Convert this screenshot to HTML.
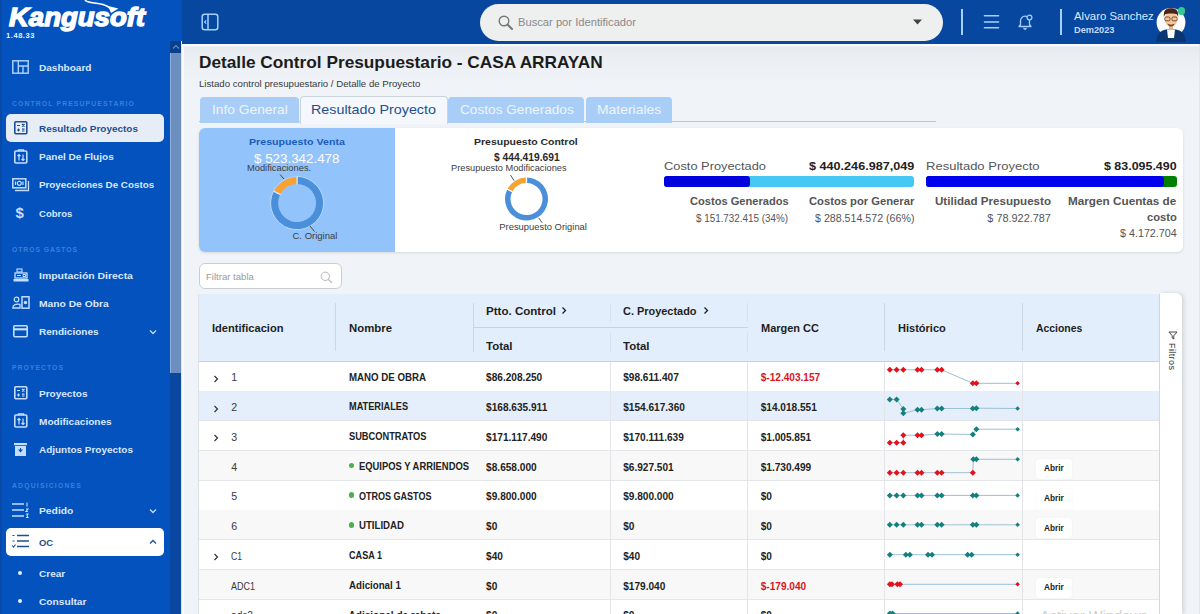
<!DOCTYPE html>
<html><head><meta charset="utf-8"><title>Kangusoft</title>
<style>
html,body{margin:0;padding:0;}
body{width:1200px;height:614px;overflow:hidden;position:relative;background:#f0f4f8;font-family:"Liberation Sans",sans-serif;}
.t{position:absolute;white-space:nowrap;}
</style></head><body>

<div style="position:absolute;left:182px;top:44px;width:1018px;height:570px;background:linear-gradient(#f7f9fc 0px,#f7f9fc 1.5px,#e6e9ed 3px,#ebeef2 14px,#f0f4f8 40px,#f0f4f8 100%);"></div>
<div style="position:absolute;left:182px;top:44px;width:1.8px;height:570px;background:#f8fafd;"></div>
<div style="position:absolute;left:1199px;top:44px;width:1px;height:570px;background:#e4e6e9;"></div>
<div style="position:absolute;left:0px;top:0px;width:182px;height:614px;background:#0352bd;"></div>
<div style="position:absolute;left:0px;top:0px;width:2px;height:614px;background:#0a49a6;"></div>
<div style="position:absolute;left:170px;top:41px;width:12px;height:12px;background:#0a3f8e;"></div>
<svg style="position:absolute;left:170px;top:41px;" width="12" height="12" viewBox="0 0 12 12"><path d="M3 7.5 L6 4.5 L9 7.5" fill="none" stroke="#5f88c8" stroke-width="1.2"/></svg>
<div style="position:absolute;left:170px;top:53px;width:12px;height:320px;background:#6c8fbf;"></div>
<div style="position:absolute;left:170px;top:53px;width:1px;height:320px;background:#8eb0dc;"></div>
<div style="position:absolute;left:170px;top:373px;width:12px;height:241px;background:#0a47a0;"></div>
<div style="position:absolute;left:181px;top:41px;width:1px;height:573px;background:#dfe6f0;"></div>
<div class="t" style="left:8.80px;top:5.01px;font-size:25.5px;line-height:25.5px;color:#ffffff;font-weight:700;font-style:italic;transform:scaleX(1.0789);transform-origin:0 0;-webkit-text-stroke:1.4px #ffffff;">Kangusoft</div>
<svg style="position:absolute;left:80px;top:0px;" width="45" height="16" viewBox="0 0 45 16"><path d="M5 0 C7 3, 15 2.5, 23 4.5 C27 5.5, 29 7, 31 9" fill="none" stroke="#ffffff" stroke-width="1.5"/><path d="M28 6 L38.5 8.5 L31 13 Z" fill="#ffffff"/></svg>
<div class="t" style="left:6.00px;top:31.65px;font-size:7.5px;line-height:7.5px;color:#e8f0ff;font-weight:700;letter-spacing:0.568px;">1.48.33</div>
<div style="position:absolute;left:6px;top:114px;width:158px;height:28px;background:#e7edf6;border-radius:5px;"></div>
<div style="position:absolute;left:6px;top:527.5px;width:158px;height:28px;background:#ffffff;border-radius:5px;"></div>
<svg style="position:absolute;left:11.5px;top:59.5px;" width="18" height="15" viewBox="0 0 18 15"><rect x="0.8" y="0.8" width="15.4" height="12.4" fill="none" stroke="#a9d0ff" stroke-width="1.5"/><path d="M6.3 1 V13.5 M6.3 6 H16.5 M11 6 V13.5" stroke="#a9d0ff" stroke-width="1.4" fill="none"/></svg>
<div class="t" style="left:39.00px;top:63.55px;font-size:8.8px;line-height:8.8px;color:#dae8fe;font-weight:700;transform:scaleX(1.1427);transform-origin:0 0;">Dashboard</div>
<div class="t" style="left:12.00px;top:100.54px;font-size:6.8px;line-height:6.8px;color:#3b7fdc;font-weight:700;letter-spacing:1.137px;">CONTROL PRESUPUESTARIO</div>
<svg style="position:absolute;left:13.5px;top:121px;" width="14" height="14" viewBox="0 0 14 14"><rect x="0.8" y="0.8" width="12" height="12" rx="1" fill="none" stroke="#1f4f8f" stroke-width="1.6"/><path d="M3 4.5 H6 M8 3 L10.5 5.5 M10.5 3 L8 5.5 M3 9 H6 M4.5 7.5 V10.5 M8 8.2 H10.5 M8 10 H10.5" stroke="#1f4f8f" stroke-width="1.2" fill="none"/></svg>
<div class="t" style="left:39.00px;top:125.05px;font-size:8.8px;line-height:8.8px;color:#1f4f8f;font-weight:700;transform:scaleX(1.1308);transform-origin:0 0;">Resultado Proyectos</div>
<svg style="position:absolute;left:13.5px;top:148.5px;" width="14" height="15" viewBox="0 0 14 15"><rect x="0.8" y="2" width="12" height="12" rx="1" fill="none" stroke="#c4defe" stroke-width="1.6"/><path d="M4.5 2.5 V1 H9.5 V2.5" fill="none" stroke="#c4defe" stroke-width="1.4"/><path d="M5 11.5 V5.5 M3.5 7 L5 5.5 L6.5 7 M9 5.5 V11.5 M7.5 10 L9 11.5 L10.5 10" fill="none" stroke="#c4defe" stroke-width="1.2"/></svg>
<div class="t" style="left:39.00px;top:153.35px;font-size:8.8px;line-height:8.8px;color:#dae8fe;font-weight:700;transform:scaleX(1.1407);transform-origin:0 0;">Panel De Flujos</div>
<svg style="position:absolute;left:11.5px;top:177.5px;" width="18" height="14" viewBox="0 0 18 14"><rect x="0.8" y="0.8" width="13" height="9" fill="none" stroke="#c4defe" stroke-width="1.5"/><path d="M3 12.5 H16.5 V3" fill="none" stroke="#c4defe" stroke-width="1.3"/><circle cx="7.3" cy="5.3" r="2" fill="none" stroke="#c4defe" stroke-width="1.2"/><path d="M3.5 3.5 V7 M11 3.5 V7" stroke="#c4defe" stroke-width="1.2"/></svg>
<div class="t" style="left:39.00px;top:181.35px;font-size:8.8px;line-height:8.8px;color:#dae8fe;font-weight:700;transform:scaleX(1.1158);transform-origin:0 0;">Proyecciones De Costos</div>
<div class="t" style="left:15.50px;top:204.80px;font-size:15px;line-height:15px;color:#c4defe;font-weight:700;">$</div>
<div class="t" style="left:39.00px;top:209.65px;font-size:8.8px;line-height:8.8px;color:#dae8fe;font-weight:700;transform:scaleX(1.0822);transform-origin:0 0;">Cobros</div>
<div class="t" style="left:12.00px;top:246.54px;font-size:6.8px;line-height:6.8px;color:#3b7fdc;font-weight:700;letter-spacing:0.945px;">OTROS GASTOS</div>
<svg style="position:absolute;left:12.5px;top:267.5px;" width="16" height="14" viewBox="0 0 16 14"><rect x="2" y="5" width="12" height="5" fill="none" stroke="#c4defe" stroke-width="1.3"/><rect x="0.5" y="11" width="15" height="2.5" fill="#c4defe"/><rect x="4" y="1" width="5" height="3" fill="none" stroke="#c4defe" stroke-width="1.1"/><path d="M4 7.5 H8 M10 6.5 H12.5 V8.5 H10 Z" stroke="#c4defe" stroke-width="1" fill="none"/></svg>
<div class="t" style="left:39.00px;top:271.55px;font-size:8.8px;line-height:8.8px;color:#dae8fe;font-weight:700;transform:scaleX(1.1858);transform-origin:0 0;">Imputación Directa</div>
<svg style="position:absolute;left:11.5px;top:296px;" width="18" height="13" viewBox="0 0 18 13"><circle cx="4.5" cy="3.5" r="2.3" fill="none" stroke="#c4defe" stroke-width="1.3"/><path d="M0.8 12 C1 8.5, 4 7.5, 8 8.3 V12 Z" fill="none" stroke="#c4defe" stroke-width="1.3"/><rect x="10" y="0.8" width="7" height="11.4" fill="none" stroke="#c4defe" stroke-width="1.5"/><circle cx="13.5" cy="6.5" r="1.7" fill="#c4defe"/></svg>
<div class="t" style="left:39.00px;top:299.95px;font-size:8.8px;line-height:8.8px;color:#dae8fe;font-weight:700;transform:scaleX(1.1683);transform-origin:0 0;">Mano De Obra</div>
<svg style="position:absolute;left:12.5px;top:324.5px;" width="15" height="13" viewBox="0 0 15 13"><rect x="0.8" y="0.8" width="13.4" height="11" rx="1" fill="none" stroke="#c4defe" stroke-width="1.6"/><rect x="0.8" y="3.2" width="13.4" height="2.2" fill="#c4defe"/></svg>
<div class="t" style="left:39.00px;top:327.95px;font-size:8.8px;line-height:8.8px;color:#dae8fe;font-weight:700;transform:scaleX(1.1390);transform-origin:0 0;">Rendiciones</div>
<svg style="position:absolute;left:148px;top:327.8px;" width="10" height="8" viewBox="0 0 10 8"><path d="M2 2.5 L5 5.5 L8 2.5" fill="none" stroke="#c4defe" stroke-width="1.3"/></svg>
<div class="t" style="left:12.00px;top:365.24px;font-size:6.8px;line-height:6.8px;color:#3b7fdc;font-weight:700;letter-spacing:1.047px;">PROYECTOS</div>
<svg style="position:absolute;left:13.5px;top:385.5px;" width="14" height="14" viewBox="0 0 14 14"><rect x="0.8" y="0.8" width="12" height="12" rx="1" fill="none" stroke="#c4defe" stroke-width="1.6"/><path d="M3 4.5 H6 M8 3 L10.5 5.5 M10.5 3 L8 5.5 M3 9 H6 M4.5 7.5 V10.5 M8 8.2 H10.5 M8 10 H10.5" stroke="#c4defe" stroke-width="1.2" fill="none"/></svg>
<div class="t" style="left:39.00px;top:389.85px;font-size:8.8px;line-height:8.8px;color:#dae8fe;font-weight:700;transform:scaleX(1.1394);transform-origin:0 0;">Proyectos</div>
<svg style="position:absolute;left:13.5px;top:412.5px;" width="14" height="15" viewBox="0 0 14 15"><rect x="0.8" y="2" width="12" height="12" rx="1" fill="none" stroke="#c4defe" stroke-width="1.6"/><path d="M4.5 2.5 V1 H9.5 V2.5" fill="none" stroke="#c4defe" stroke-width="1.4"/><path d="M5 11.5 V5.5 M3.5 7 L5 5.5 L6.5 7 M9 5.5 V11.5 M7.5 10 L9 11.5 L10.5 10" fill="none" stroke="#c4defe" stroke-width="1.2"/></svg>
<div class="t" style="left:39.00px;top:417.95px;font-size:8.8px;line-height:8.8px;color:#dae8fe;font-weight:700;transform:scaleX(1.1441);transform-origin:0 0;">Modificaciones</div>
<svg style="position:absolute;left:14px;top:443px;" width="14" height="14" viewBox="0 0 14 14"><rect x="0" y="0" width="13" height="2.2" fill="#c4defe"/><rect x="1" y="3" width="11" height="10" fill="#c4defe"/><path d="M4 6.5 H9 L6.5 9.5 Z M6 5 H7 V7 H6 Z" fill="#0352bd"/></svg>
<div class="t" style="left:39.00px;top:446.15px;font-size:8.8px;line-height:8.8px;color:#dae8fe;font-weight:700;transform:scaleX(1.1301);transform-origin:0 0;">Adjuntos Proyectos</div>
<div class="t" style="left:12.00px;top:483.04px;font-size:6.8px;line-height:6.8px;color:#3b7fdc;font-weight:700;letter-spacing:1.199px;">ADQUISICIONES</div>
<svg style="position:absolute;left:12px;top:502px;" width="18" height="17" viewBox="0 0 18 17"><path d="M0 2 H12 M0 8 H12 M0 14 H12" stroke="#c4defe" stroke-width="1.5"/><path d="M15 0.5 V4.5 M14 7 H16 L14 9.5 H16 M14 12 H16 L15 13.5 L16 15.5 H14" stroke="#c4defe" stroke-width="1.1" fill="none"/></svg>
<div class="t" style="left:39.00px;top:507.15px;font-size:8.8px;line-height:8.8px;color:#dae8fe;font-weight:700;transform:scaleX(1.1707);transform-origin:0 0;">Pedido</div>
<svg style="position:absolute;left:148px;top:507px;" width="10" height="8" viewBox="0 0 10 8"><path d="M2 2.5 L5 5.5 L8 2.5" fill="none" stroke="#c4defe" stroke-width="1.3"/></svg>
<svg style="position:absolute;left:11.5px;top:534px;" width="18" height="14" viewBox="0 0 18 14"><path d="M5 1.5 H17 M5 7 H17 M5 12.5 H17" stroke="#1f4f8f" stroke-width="1.5"/><path d="M0.5 1.5 H2.5 M0.5 7 H2.5" stroke="#1f4f8f" stroke-width="1.2"/><path d="M0.3 11.5 L1.5 13 L3.5 10.5" stroke="#1f4f8f" stroke-width="1.1" fill="none"/></svg>
<div class="t" style="left:39.00px;top:538.55px;font-size:8.8px;line-height:8.8px;color:#1f4f8f;font-weight:700;transform:scaleX(1.0712);transform-origin:0 0;">OC</div>
<svg style="position:absolute;left:148px;top:538.4px;" width="10" height="8" viewBox="0 0 10 8"><path d="M2 5.5 L5 2.5 L8 5.5" fill="none" stroke="#1f4f8f" stroke-width="1.3"/></svg>
<div style="position:absolute;left:18px;top:571px;width:4px;height:4px;background:#e6efff;border-radius:50%;"></div>
<div class="t" style="left:39.00px;top:569.75px;font-size:8.8px;line-height:8.8px;color:#dae8fe;font-weight:700;transform:scaleX(1.1421);transform-origin:0 0;">Crear</div>
<div style="position:absolute;left:18px;top:599.2px;width:4px;height:4px;background:#e6efff;border-radius:50%;"></div>
<div class="t" style="left:39.00px;top:597.85px;font-size:8.8px;line-height:8.8px;color:#dae8fe;font-weight:700;transform:scaleX(1.1559);transform-origin:0 0;">Consultar</div>
<div style="position:absolute;left:182px;top:0px;width:1018px;height:44px;background:#07479f;"></div>
<svg style="position:absolute;left:201px;top:13px;" width="18" height="18" viewBox="0 0 18 18"><rect x="1.2" y="1.2" width="15.6" height="15.6" rx="2.5" fill="none" stroke="#a6d0ff" stroke-width="1.5"/><path d="M7 1.5 V16.5" stroke="#a6d0ff" stroke-width="1.5"/><path d="M5.2 7.3 L3.6 9 L5.2 10.7" fill="none" stroke="#a6d0ff" stroke-width="1.2"/></svg>
<div style="position:absolute;left:480px;top:3.5px;width:463px;height:37px;background:#eeefef;border-radius:19px;"></div>
<svg style="position:absolute;left:498px;top:14.5px;" width="16" height="16" viewBox="0 0 16 16"><circle cx="6" cy="6" r="4.8" fill="none" stroke="#777" stroke-width="1.4"/><path d="M9.5 9.5 L14 14" stroke="#777" stroke-width="2" stroke-linecap="round"/></svg>
<div class="t" style="left:517.80px;top:17.39px;font-size:11px;line-height:11px;color:#8a8a8a;transform:scaleX(1.0158);transform-origin:0 0;">Buscar por Identificador</div>
<svg style="position:absolute;left:912px;top:19px;" width="11" height="6" viewBox="0 0 11 6"><path d="M1 0.5 H10 L5.5 5.5 Z" fill="#444"/></svg>
<div style="position:absolute;left:961px;top:9.3px;width:1.5px;height:25.3px;background:#a6d0ff;"></div>
<svg style="position:absolute;left:983px;top:14px;" width="17" height="15" viewBox="0 0 17 15"><path d="M1.5 1.8 H15.5 M1.5 8 H15.5 M1.5 13.8 H15.5" stroke="#a6d0ff" stroke-width="1.6" stroke-linecap="round"/></svg>
<svg style="position:absolute;left:1017px;top:14px;" width="17" height="17" viewBox="0 0 17 17"><path d="M2 12.5 H14 L12.5 10.5 V7 C12.5 4, 10 2.2, 8 2.2 C5.5 2.2, 3.5 4.5, 3.5 7 V10.5 Z" fill="none" stroke="#a6d0ff" stroke-width="1.3" stroke-linejoin="round"/><path d="M6.5 14 L8 15.5 L9.5 14" fill="none" stroke="#a6d0ff" stroke-width="1.2"/><circle cx="12.5" cy="3.5" r="2.4" fill="#07479f" stroke="#a6d0ff" stroke-width="1.2"/></svg>
<div style="position:absolute;left:1060px;top:9.3px;width:1.5px;height:25.3px;background:#a6d0ff;"></div>
<div class="t" style="left:1074.00px;top:10.55px;font-size:11.4px;line-height:11.4px;color:#dce9ff;">Alvaro Sanchez</div>
<div class="t" style="left:1074.00px;top:25.16px;font-size:9.5px;line-height:9.5px;color:#c6dafa;font-weight:700;transform:scaleX(0.9707);transform-origin:0 0;">Dem2023</div>
<svg style="position:absolute;left:1150px;top:2px;" width="42" height="40" viewBox="0 0 42 40"><defs><clipPath id="av"><circle cx="21" cy="20.5" r="14.4"/></clipPath></defs>
<circle cx="21" cy="20.5" r="14.4" fill="#ffffff"/>
<path d="M6 40 C7 30, 12 27, 21 27 C30 27, 35 30, 36 40 Z" fill="#0b3672"/>
<path d="M17 27.5 L25 27.5 L24 36 L18 36 Z" fill="#ffffff"/>
<rect x="19" y="22" width="4" height="6" fill="#e7b48a"/>
<ellipse cx="21" cy="17.5" rx="6.3" ry="7.3" fill="#f1c79d"/>
<path d="M13.8 15 C13.5 8, 16 6.3, 21 6.3 C26 6.3, 28.5 8, 28.2 15 L27 12.5 C25 11.3, 17 11.3, 15 12.5 Z" fill="#4b2219"/>
<rect x="14.8" y="15" width="5.2" height="3.8" rx="1.3" fill="none" stroke="#6e3f1f" stroke-width="0.9"/>
<rect x="22" y="15" width="5.2" height="3.8" rx="1.3" fill="none" stroke="#6e3f1f" stroke-width="0.9"/>
<path d="M17.5 21.5 C18 25.5, 24 25.5, 24.5 21.5 C23 23, 19 23, 17.5 21.5 Z" fill="#7b3f1e"/></svg>
<div style="position:absolute;left:1177.5px;top:7.3px;width:7.6px;height:7.6px;background:#2fcc8c;border-radius:50%;"></div>
<div class="t" style="left:199.30px;top:53.69px;font-size:16.2px;line-height:16.2px;color:#1c1c1c;font-weight:700;transform:scaleX(1.0652);transform-origin:0 0;">Detalle Control Presupuestario - CASA ARRAYAN</div>
<div class="t" style="left:199.30px;top:78.57px;font-size:9.6px;line-height:9.6px;color:#3a3a3a;transform:scaleX(1.0051);transform-origin:0 0;">Listado control presupuestario / Detalle de Proyecto</div>
<div style="position:absolute;left:199px;top:121.3px;width:737px;height:1.2px;background:#a9c9ea;"></div>
<div style="position:absolute;left:200px;top:97px;width:99px;height:26px;background:#a8cdf6;border-radius:4px 4px 0 0;"></div>
<div class="t" style="left:211.60px;top:103.96px;font-size:12.1px;line-height:12.1px;color:#eef5fd;transform:scaleX(1.1384);transform-origin:0 0;">Info General</div>
<div style="position:absolute;left:299.5px;top:95.5px;width:148px;height:28px;background:#f4f7fb;border:1px solid #cdd3da;border-bottom:none;border-radius:4px 4px 0 0;box-sizing:border-box;"></div>
<div class="t" style="left:311.00px;top:103.96px;font-size:12.1px;line-height:12.1px;color:#1f4f90;transform:scaleX(1.1838);transform-origin:0 0;">Resultado Proyecto</div>
<div style="position:absolute;left:448px;top:97px;width:136px;height:26px;background:#a8cdf6;border-radius:4px 4px 0 0;"></div>
<div class="t" style="left:459.70px;top:103.96px;font-size:12.1px;line-height:12.1px;color:#eef5fd;transform:scaleX(1.1281);transform-origin:0 0;">Costos Generados</div>
<div style="position:absolute;left:586px;top:97px;width:86px;height:26px;background:#a8cdf6;border-radius:4px 4px 0 0;"></div>
<div class="t" style="left:597.00px;top:103.96px;font-size:12.1px;line-height:12.1px;color:#eef5fd;transform:scaleX(1.1503);transform-origin:0 0;">Materiales</div>
<div style="position:absolute;left:199px;top:128px;width:984px;height:123.5px;background:#ffffff;border-radius:6px;box-shadow:0 1px 3px rgba(0,0,0,0.12);"></div>
<div style="position:absolute;left:199px;top:128px;width:196px;height:123.5px;background:#93c3fb;border-radius:6px 0 0 6px;"></div>
<div class="t" style="left:249.00px;top:136.99px;font-size:9.7px;line-height:9.7px;color:#1b5cb8;font-weight:700;transform:scaleX(1.0994);transform-origin:0 0;">Presupuesto Venta</div>
<div class="t" style="left:254.25px;top:152.13px;font-size:13.2px;line-height:13.2px;color:#ffffff;transform:scaleX(1.0130);transform-origin:0 0;">$ 523.342.478</div>
<svg style="position:absolute;left:199px;top:128.5px;" width="196" height="123" viewBox="0 0 196 123"><circle cx="98.1" cy="74.1" r="26.4" fill="none" stroke="#d8e9fd" stroke-width="0.8" opacity="0.7"/><path d="M74.93 62.30 A26 26 0 0 1 98.10 48.10 L98.10 55.10 A19 19 0 0 0 81.17 65.47 Z" fill="#f8a232"/><path d="M98.10 48.10 A26 26 0 1 1 74.93 62.30 L81.17 65.47 A19 19 0 1 0 98.10 55.10 Z" fill="#4b8fdb"/><path d="M81.62 65.70 L74.49 62.07" stroke="#d8e9fd" stroke-width="1.3"/><path d="M98.10 55.60 L98.10 47.60" stroke="#d8e9fd" stroke-width="1.3"/><path d="M85 50 L81 45.5" stroke="#444" stroke-width="1"/><path d="M111 97 L115.5 102.5" stroke="#444" stroke-width="1"/></svg>
<div class="t" style="left:246.85px;top:162.84px;font-size:9.4px;line-height:9.4px;color:#3d3d3d;transform:scaleX(0.9926);transform-origin:0 0;">Modificaciones.</div>
<div class="t" style="left:292.50px;top:231.46px;font-size:9.5px;line-height:9.5px;color:#3d3d3d;">C. Original</div>
<div class="t" style="left:474.40px;top:137.10px;font-size:9.8px;line-height:9.8px;color:#2a2a2a;font-weight:700;transform:scaleX(1.0711);transform-origin:0 0;">Presupuesto Control</div>
<div class="t" style="left:493.80px;top:151.51px;font-size:10.5px;line-height:10.5px;color:#2a2a2a;font-weight:700;transform:scaleX(0.9770);transform-origin:0 0;">$ 444.419.691</div>
<div class="t" style="left:451.40px;top:163.93px;font-size:9.3px;line-height:9.3px;color:#3d3d3d;transform:scaleX(0.9939);transform-origin:0 0;">Presupuesto Modificaciones</div>
<svg style="position:absolute;left:395px;top:128.5px;" width="260" height="123" viewBox="0 0 260 123"><circle cx="131.5" cy="70" r="21.9" fill="none" stroke="#ffffff" stroke-width="0.8" opacity="0.7"/><path d="M112.34 60.24 A21.5 21.5 0 0 1 131.50 48.50 L131.50 54.00 A16 16 0 0 0 117.24 62.74 Z" fill="#f8a232"/><path d="M131.50 48.50 A21.5 21.5 0 1 1 112.34 60.24 L117.24 62.74 A16 16 0 1 0 131.50 54.00 Z" fill="#4b8fdb"/><path d="M117.69 62.96 L111.90 60.01" stroke="#ffffff" stroke-width="1.3"/><path d="M131.50 54.50 L131.50 48.00" stroke="#ffffff" stroke-width="1.3"/><path d="M119 51.5 L115.4 46" stroke="#555" stroke-width="1"/><path d="M143.6 88.8 L147.2 93.8" stroke="#555" stroke-width="1"/></svg>
<div class="t" style="left:499.35px;top:221.84px;font-size:9.4px;line-height:9.4px;color:#3d3d3d;">Presupuesto Original</div>
<div class="t" style="left:664.00px;top:160.63px;font-size:11.3px;line-height:11.3px;color:#555555;transform:scaleX(1.1357);transform-origin:0 0;">Costo Proyectado</div>
<div class="t" style="left:808.70px;top:160.63px;font-size:11.3px;line-height:11.3px;color:#222222;font-weight:700;transform:scaleX(1.1173);transform-origin:0 0;">$ 440.246.987,049</div>
<div style="position:absolute;left:663.5px;top:176px;width:250.5px;height:11px;background:#45c8f4;border-radius:3px;"></div>
<div style="position:absolute;left:663.5px;top:176px;width:86.5px;height:11px;background:#0000df;border-radius:3px;"></div>
<div class="t" style="left:689.70px;top:196.88px;font-size:10.3px;line-height:10.3px;color:#555555;font-weight:700;transform:scaleX(1.0778);transform-origin:0 0;">Costos Generados</div>
<div class="t" style="left:696.40px;top:212.77px;font-size:10.9px;line-height:10.9px;color:#555555;transform:scaleX(0.9037);transform-origin:0 0;">$ 151.732.415 (34%)</div>
<div class="t" style="left:808.70px;top:196.88px;font-size:10.3px;line-height:10.3px;color:#555555;font-weight:700;transform:scaleX(1.0887);transform-origin:0 0;">Costos por Generar</div>
<div class="t" style="left:814.50px;top:212.77px;font-size:10.9px;line-height:10.9px;color:#555555;transform:scaleX(0.9774);transform-origin:0 0;">$ 288.514.572 (66%)</div>
<div class="t" style="left:926.20px;top:160.63px;font-size:11.3px;line-height:11.3px;color:#555555;transform:scaleX(1.1520);transform-origin:0 0;">Resultado Proyecto</div>
<div class="t" style="left:1104.00px;top:160.63px;font-size:11.3px;line-height:11.3px;color:#222222;font-weight:700;transform:scaleX(1.1005);transform-origin:0 0;">$ 83.095.490</div>
<div style="position:absolute;left:926px;top:176px;width:250.6px;height:11px;background:#008000;border-radius:3px;"></div>
<div style="position:absolute;left:926px;top:176px;width:238.2px;height:11px;background:#0000ef;border-radius:3px;"></div>
<div class="t" style="left:934.90px;top:197.08px;font-size:10.3px;line-height:10.3px;color:#555555;font-weight:700;transform:scaleX(1.1261);transform-origin:0 0;">Utilidad Presupuesto</div>
<div class="t" style="left:987.30px;top:212.77px;font-size:10.9px;line-height:10.9px;color:#555555;">$ 78.922.787</div>
<div class="t" style="left:1068.30px;top:197.08px;font-size:10.3px;line-height:10.3px;color:#555555;font-weight:700;transform:scaleX(1.1400);transform-origin:0 0;">Margen Cuentas de</div>
<div class="t" style="left:1146.80px;top:212.78px;font-size:10.3px;line-height:10.3px;color:#555555;font-weight:700;transform:scaleX(1.0849);transform-origin:0 0;">costo</div>
<div class="t" style="left:1119.80px;top:228.37px;font-size:10.9px;line-height:10.9px;color:#555555;transform:scaleX(0.9865);transform-origin:0 0;">$ 4.172.704</div>
<div style="position:absolute;left:199px;top:263.3px;width:143.4px;height:26.1px;background:#ffffff;border:1px solid #c9cdd2;border-radius:6px;box-sizing:border-box;"></div>
<div class="t" style="left:206.00px;top:272.34px;font-size:9.4px;line-height:9.4px;color:#9a9a9a;transform:scaleX(1.0211);transform-origin:0 0;">Filtrar tabla</div>
<svg style="position:absolute;left:319.5px;top:270.5px;" width="13" height="13" viewBox="0 0 13 13"><circle cx="5.3" cy="5.3" r="4.2" fill="none" stroke="#b5b5b5" stroke-width="1"/><path d="M8.3 8.3 L11.8 11.8" stroke="#b5b5b5" stroke-width="1.2"/></svg>
<div style="position:absolute;left:199px;top:293.5px;width:961px;height:68.0px;background:#e2eefb;"></div>
<div style="position:absolute;left:199px;top:360.9px;width:961px;height:1.2px;background:#c6d2df;"></div>
<div style="position:absolute;left:335px;top:302.8px;width:1px;height:48.19999999999999px;background:#cbd8e6;"></div>
<div style="position:absolute;left:472.5px;top:302.8px;width:1px;height:49.19999999999999px;background:#cbd8e6;"></div>
<div style="position:absolute;left:609.5px;top:302.8px;width:1px;height:19.19999999999999px;background:#d6e2ee;"></div>
<div style="position:absolute;left:609.5px;top:332px;width:1px;height:20px;background:#d6e2ee;"></div>
<div style="position:absolute;left:747px;top:302.8px;width:1px;height:19.19999999999999px;background:#d6e2ee;"></div>
<div style="position:absolute;left:747px;top:332px;width:1px;height:20px;background:#d6e2ee;"></div>
<div style="position:absolute;left:884px;top:302.8px;width:1px;height:48.19999999999999px;background:#cbd8e6;"></div>
<div style="position:absolute;left:1021.5px;top:302.8px;width:1px;height:48.19999999999999px;background:#cbd8e6;"></div>
<div style="position:absolute;left:473px;top:326.5px;width:275px;height:1.2px;background:#c5d3e2;"></div>
<div class="t" style="left:212.00px;top:323.23px;font-size:11.3px;line-height:11.3px;color:#1e1e1e;font-weight:700;transform:scaleX(0.9818);transform-origin:0 0;">Identificacion</div>
<div class="t" style="left:349.40px;top:323.23px;font-size:11.3px;line-height:11.3px;color:#1e1e1e;font-weight:700;transform:scaleX(1.0072);transform-origin:0 0;">Nombre</div>
<div class="t" style="left:486.40px;top:305.83px;font-size:11.3px;line-height:11.3px;color:#1e1e1e;font-weight:700;transform:scaleX(1.0233);transform-origin:0 0;">Ptto. Control</div>
<svg style="position:absolute;left:560px;top:306px;" width="8" height="10" viewBox="0 0 8 10"><path d="M2.5 1.5 L5.5 4.5 L2.5 7.5" fill="none" stroke="#1e1e1e" stroke-width="1.3"/></svg>
<div class="t" style="left:486.40px;top:340.73px;font-size:11.3px;line-height:11.3px;color:#1e1e1e;font-weight:700;transform:scaleX(1.0134);transform-origin:0 0;">Total</div>
<div class="t" style="left:623.20px;top:305.83px;font-size:11.3px;line-height:11.3px;color:#1e1e1e;font-weight:700;transform:scaleX(0.9674);transform-origin:0 0;">C. Proyectado</div>
<svg style="position:absolute;left:701.5px;top:306px;" width="8" height="10" viewBox="0 0 8 10"><path d="M2.5 1.5 L5.5 4.5 L2.5 7.5" fill="none" stroke="#1e1e1e" stroke-width="1.3"/></svg>
<div class="t" style="left:623.20px;top:340.73px;font-size:11.3px;line-height:11.3px;color:#1e1e1e;font-weight:700;transform:scaleX(1.0134);transform-origin:0 0;">Total</div>
<div class="t" style="left:760.70px;top:323.43px;font-size:11.3px;line-height:11.3px;color:#1e1e1e;font-weight:700;transform:scaleX(0.9725);transform-origin:0 0;">Margen CC</div>
<div class="t" style="left:898.40px;top:323.03px;font-size:11.3px;line-height:11.3px;color:#1e1e1e;font-weight:700;transform:scaleX(0.9761);transform-origin:0 0;">Histórico</div>
<div class="t" style="left:1035.60px;top:323.03px;font-size:11.3px;line-height:11.3px;color:#1e1e1e;font-weight:700;transform:scaleX(0.9216);transform-origin:0 0;">Acciones</div>
<div style="position:absolute;left:199px;top:361.5px;width:961px;height:29.75px;background:#ffffff;"></div>
<div style="position:absolute;left:199px;top:390.55px;width:961px;height:1.2px;background:#e4e6e9;"></div>
<div style="position:absolute;left:609.5px;top:361.5px;width:1.2px;height:29.75px;background:#e3e5e8;"></div>
<div style="position:absolute;left:747px;top:361.5px;width:1.2px;height:29.75px;background:#e3e5e8;"></div>
<div style="position:absolute;left:884px;top:361.5px;width:1.2px;height:29.75px;background:#e3e5e8;"></div>
<div style="position:absolute;left:1021.5px;top:361.5px;width:1.2px;height:29.75px;background:#e3e5e8;"></div>
<svg style="position:absolute;left:212px;top:373.8px;" width="8" height="10" viewBox="0 0 8 10"><path d="M2.5 2 L5.5 5 L2.5 8" fill="none" stroke="#333" stroke-width="1.2"/></svg>
<div class="t" style="left:231.20px;top:372.33px;font-size:10.6px;line-height:10.6px;color:#3a3a3a;">1</div>
<div class="t" style="left:348.60px;top:372.54px;font-size:10px;line-height:10px;color:#222;font-weight:700;transform:scaleX(0.9692);transform-origin:0 0;">MANO DE OBRA</div>
<div class="t" style="left:486.10px;top:373.25px;font-size:10.1px;line-height:10.1px;color:#222;font-weight:700;">$86.208.250</div>
<div class="t" style="left:623.20px;top:373.25px;font-size:10.1px;line-height:10.1px;color:#222;font-weight:700;">$98.611.407</div>
<div class="t" style="left:760.70px;top:373.25px;font-size:10.1px;line-height:10.1px;color:#d9161c;font-weight:700;">$-12.403.157</div>
<div style="position:absolute;left:199px;top:391.25px;width:961px;height:29.75px;background:#e4effb;"></div>
<div style="position:absolute;left:199px;top:420.3px;width:961px;height:1.2px;background:#e4e6e9;"></div>
<div style="position:absolute;left:609.5px;top:391.25px;width:1.2px;height:29.75px;background:#e3e5e8;"></div>
<div style="position:absolute;left:747px;top:391.25px;width:1.2px;height:29.75px;background:#e3e5e8;"></div>
<div style="position:absolute;left:884px;top:391.25px;width:1.2px;height:29.75px;background:#e3e5e8;"></div>
<div style="position:absolute;left:1021.5px;top:391.25px;width:1.2px;height:29.75px;background:#e3e5e8;"></div>
<svg style="position:absolute;left:212px;top:403.55px;" width="8" height="10" viewBox="0 0 8 10"><path d="M2.5 2 L5.5 5 L2.5 8" fill="none" stroke="#333" stroke-width="1.2"/></svg>
<div class="t" style="left:231.20px;top:402.08px;font-size:10.6px;line-height:10.6px;color:#3a3a3a;">2</div>
<div class="t" style="left:348.60px;top:402.29px;font-size:10px;line-height:10px;color:#222;font-weight:700;transform:scaleX(0.9182);transform-origin:0 0;">MATERIALES</div>
<div class="t" style="left:486.10px;top:403.00px;font-size:10.1px;line-height:10.1px;color:#222;font-weight:700;">$168.635.911</div>
<div class="t" style="left:623.20px;top:403.00px;font-size:10.1px;line-height:10.1px;color:#222;font-weight:700;">$154.617.360</div>
<div class="t" style="left:760.70px;top:403.00px;font-size:10.1px;line-height:10.1px;color:#222;font-weight:700;">$14.018.551</div>
<div style="position:absolute;left:199px;top:421.0px;width:961px;height:29.75px;background:#ffffff;"></div>
<div style="position:absolute;left:199px;top:450.05px;width:961px;height:1.2px;background:#e4e6e9;"></div>
<div style="position:absolute;left:609.5px;top:421.0px;width:1.2px;height:29.75px;background:#e3e5e8;"></div>
<div style="position:absolute;left:747px;top:421.0px;width:1.2px;height:29.75px;background:#e3e5e8;"></div>
<div style="position:absolute;left:884px;top:421.0px;width:1.2px;height:29.75px;background:#e3e5e8;"></div>
<div style="position:absolute;left:1021.5px;top:421.0px;width:1.2px;height:29.75px;background:#e3e5e8;"></div>
<svg style="position:absolute;left:212px;top:433.3px;" width="8" height="10" viewBox="0 0 8 10"><path d="M2.5 2 L5.5 5 L2.5 8" fill="none" stroke="#333" stroke-width="1.2"/></svg>
<div class="t" style="left:231.20px;top:431.83px;font-size:10.6px;line-height:10.6px;color:#3a3a3a;">3</div>
<div class="t" style="left:348.60px;top:432.04px;font-size:10px;line-height:10px;color:#222;font-weight:700;transform:scaleX(0.9267);transform-origin:0 0;">SUBCONTRATOS</div>
<div class="t" style="left:486.10px;top:432.75px;font-size:10.1px;line-height:10.1px;color:#222;font-weight:700;">$171.117.490</div>
<div class="t" style="left:623.20px;top:432.75px;font-size:10.1px;line-height:10.1px;color:#222;font-weight:700;">$170.111.639</div>
<div class="t" style="left:760.70px;top:432.75px;font-size:10.1px;line-height:10.1px;color:#222;font-weight:700;">$1.005.851</div>
<div style="position:absolute;left:199px;top:450.75px;width:961px;height:29.75px;background:#f8f8f8;"></div>
<div style="position:absolute;left:199px;top:479.8px;width:961px;height:1.2px;background:#e4e6e9;"></div>
<div style="position:absolute;left:609.5px;top:450.75px;width:1.2px;height:29.75px;background:#e3e5e8;"></div>
<div style="position:absolute;left:747px;top:450.75px;width:1.2px;height:29.75px;background:#e3e5e8;"></div>
<div style="position:absolute;left:884px;top:450.75px;width:1.2px;height:29.75px;background:#e3e5e8;"></div>
<div style="position:absolute;left:1021.5px;top:450.75px;width:1.2px;height:29.75px;background:#e3e5e8;"></div>
<div class="t" style="left:231.20px;top:461.58px;font-size:10.6px;line-height:10.6px;color:#3a3a3a;">4</div>
<div style="position:absolute;left:348.5px;top:462.55px;width:5.8px;height:5.8px;background:#4caf50;border-radius:50%;"></div>
<div class="t" style="left:358.90px;top:461.79px;font-size:10px;line-height:10px;color:#222;font-weight:700;transform:scaleX(0.9396);transform-origin:0 0;">EQUIPOS Y ARRIENDOS</div>
<div class="t" style="left:486.10px;top:462.50px;font-size:10.1px;line-height:10.1px;color:#222;font-weight:700;">$8.658.000</div>
<div class="t" style="left:623.20px;top:462.50px;font-size:10.1px;line-height:10.1px;color:#222;font-weight:700;">$6.927.501</div>
<div class="t" style="left:760.70px;top:462.50px;font-size:10.1px;line-height:10.1px;color:#222;font-weight:700;">$1.730.499</div>
<div style="position:absolute;left:1036px;top:458.75px;width:36px;height:20px;background:#ffffff;border-radius:3px;box-shadow:0 0 2px rgba(0,0,0,0.06);"></div>
<div class="t" style="left:1043.90px;top:464.40px;font-size:8.8px;line-height:8.8px;color:#222;font-weight:700;transform:scaleX(0.9417);transform-origin:0 0;">Abrir</div>
<div style="position:absolute;left:199px;top:480.5px;width:961px;height:29.75px;background:#ffffff;"></div>
<div style="position:absolute;left:199px;top:509.55px;width:961px;height:1.2px;background:#e4e6e9;"></div>
<div style="position:absolute;left:609.5px;top:480.5px;width:1.2px;height:29.75px;background:#e3e5e8;"></div>
<div style="position:absolute;left:747px;top:480.5px;width:1.2px;height:29.75px;background:#e3e5e8;"></div>
<div style="position:absolute;left:884px;top:480.5px;width:1.2px;height:29.75px;background:#e3e5e8;"></div>
<div style="position:absolute;left:1021.5px;top:480.5px;width:1.2px;height:29.75px;background:#e3e5e8;"></div>
<div class="t" style="left:231.20px;top:491.33px;font-size:10.6px;line-height:10.6px;color:#3a3a3a;">5</div>
<div style="position:absolute;left:348.5px;top:492.3px;width:5.8px;height:5.8px;background:#4caf50;border-radius:50%;"></div>
<div class="t" style="left:358.90px;top:491.54px;font-size:10px;line-height:10px;color:#222;font-weight:700;transform:scaleX(0.9020);transform-origin:0 0;">OTROS GASTOS</div>
<div class="t" style="left:486.10px;top:492.25px;font-size:10.1px;line-height:10.1px;color:#222;font-weight:700;">$9.800.000</div>
<div class="t" style="left:623.20px;top:492.25px;font-size:10.1px;line-height:10.1px;color:#222;font-weight:700;">$9.800.000</div>
<div class="t" style="left:760.70px;top:492.25px;font-size:10.1px;line-height:10.1px;color:#222;font-weight:700;">$0</div>
<div style="position:absolute;left:1036px;top:488.5px;width:36px;height:20px;background:#ffffff;border-radius:3px;box-shadow:0 0 2px rgba(0,0,0,0.06);"></div>
<div class="t" style="left:1043.90px;top:494.15px;font-size:8.8px;line-height:8.8px;color:#222;font-weight:700;transform:scaleX(0.9417);transform-origin:0 0;">Abrir</div>
<div style="position:absolute;left:199px;top:510.25px;width:961px;height:29.75px;background:#f8f8f8;"></div>
<div style="position:absolute;left:199px;top:539.3px;width:961px;height:1.2px;background:#e4e6e9;"></div>
<div style="position:absolute;left:609.5px;top:510.25px;width:1.2px;height:29.75px;background:#e3e5e8;"></div>
<div style="position:absolute;left:747px;top:510.25px;width:1.2px;height:29.75px;background:#e3e5e8;"></div>
<div style="position:absolute;left:884px;top:510.25px;width:1.2px;height:29.75px;background:#e3e5e8;"></div>
<div style="position:absolute;left:1021.5px;top:510.25px;width:1.2px;height:29.75px;background:#e3e5e8;"></div>
<div class="t" style="left:231.20px;top:521.08px;font-size:10.6px;line-height:10.6px;color:#3a3a3a;">6</div>
<div style="position:absolute;left:348.5px;top:522.05px;width:5.8px;height:5.8px;background:#4caf50;border-radius:50%;"></div>
<div class="t" style="left:358.90px;top:521.28px;font-size:10px;line-height:10px;color:#222;font-weight:700;transform:scaleX(0.9644);transform-origin:0 0;">UTILIDAD</div>
<div class="t" style="left:486.10px;top:522.00px;font-size:10.1px;line-height:10.1px;color:#222;font-weight:700;">$0</div>
<div class="t" style="left:623.20px;top:522.00px;font-size:10.1px;line-height:10.1px;color:#222;font-weight:700;">$0</div>
<div class="t" style="left:760.70px;top:522.00px;font-size:10.1px;line-height:10.1px;color:#222;font-weight:700;">$0</div>
<div style="position:absolute;left:1036px;top:518.25px;width:36px;height:20px;background:#ffffff;border-radius:3px;box-shadow:0 0 2px rgba(0,0,0,0.06);"></div>
<div class="t" style="left:1043.90px;top:523.90px;font-size:8.8px;line-height:8.8px;color:#222;font-weight:700;transform:scaleX(0.9417);transform-origin:0 0;">Abrir</div>
<div style="position:absolute;left:199px;top:540.0px;width:961px;height:29.75px;background:#ffffff;"></div>
<div style="position:absolute;left:199px;top:569.05px;width:961px;height:1.2px;background:#e4e6e9;"></div>
<div style="position:absolute;left:609.5px;top:540.0px;width:1.2px;height:29.75px;background:#e3e5e8;"></div>
<div style="position:absolute;left:747px;top:540.0px;width:1.2px;height:29.75px;background:#e3e5e8;"></div>
<div style="position:absolute;left:884px;top:540.0px;width:1.2px;height:29.75px;background:#e3e5e8;"></div>
<div style="position:absolute;left:1021.5px;top:540.0px;width:1.2px;height:29.75px;background:#e3e5e8;"></div>
<svg style="position:absolute;left:212px;top:552.3px;" width="8" height="10" viewBox="0 0 8 10"><path d="M2.5 2 L5.5 5 L2.5 8" fill="none" stroke="#333" stroke-width="1.2"/></svg>
<div class="t" style="left:231.20px;top:550.83px;font-size:10.6px;line-height:10.6px;color:#3a3a3a;transform:scaleX(0.8118);transform-origin:0 0;">C1</div>
<div class="t" style="left:348.60px;top:551.03px;font-size:10px;line-height:10px;color:#222;font-weight:700;transform:scaleX(0.9090);transform-origin:0 0;">CASA 1</div>
<div class="t" style="left:486.10px;top:551.75px;font-size:10.1px;line-height:10.1px;color:#222;font-weight:700;">$40</div>
<div class="t" style="left:623.20px;top:551.75px;font-size:10.1px;line-height:10.1px;color:#222;font-weight:700;">$40</div>
<div class="t" style="left:760.70px;top:551.75px;font-size:10.1px;line-height:10.1px;color:#222;font-weight:700;">$0</div>
<div style="position:absolute;left:199px;top:569.75px;width:961px;height:29.75px;background:#f8f8f8;"></div>
<div style="position:absolute;left:199px;top:598.8px;width:961px;height:1.2px;background:#e4e6e9;"></div>
<div style="position:absolute;left:609.5px;top:569.75px;width:1.2px;height:29.75px;background:#e3e5e8;"></div>
<div style="position:absolute;left:747px;top:569.75px;width:1.2px;height:29.75px;background:#e3e5e8;"></div>
<div style="position:absolute;left:884px;top:569.75px;width:1.2px;height:29.75px;background:#e3e5e8;"></div>
<div style="position:absolute;left:1021.5px;top:569.75px;width:1.2px;height:29.75px;background:#e3e5e8;"></div>
<div class="t" style="left:231.20px;top:580.58px;font-size:10.6px;line-height:10.6px;color:#3a3a3a;transform:scaleX(0.8488);transform-origin:0 0;">ADC1</div>
<div class="t" style="left:348.60px;top:580.78px;font-size:10px;line-height:10px;color:#222;font-weight:700;transform:scaleX(0.9711);transform-origin:0 0;">Adicional 1</div>
<div class="t" style="left:486.10px;top:581.50px;font-size:10.1px;line-height:10.1px;color:#222;font-weight:700;">$0</div>
<div class="t" style="left:623.20px;top:581.50px;font-size:10.1px;line-height:10.1px;color:#222;font-weight:700;">$179.040</div>
<div class="t" style="left:760.70px;top:581.50px;font-size:10.1px;line-height:10.1px;color:#d9161c;font-weight:700;">$-179.040</div>
<div style="position:absolute;left:1036px;top:577.75px;width:36px;height:20px;background:#ffffff;border-radius:3px;box-shadow:0 0 2px rgba(0,0,0,0.06);"></div>
<div class="t" style="left:1043.90px;top:583.40px;font-size:8.8px;line-height:8.8px;color:#222;font-weight:700;transform:scaleX(0.9417);transform-origin:0 0;">Abrir</div>
<div style="position:absolute;left:199px;top:599.5px;width:961px;height:29.75px;background:#ffffff;"></div>
<div style="position:absolute;left:199px;top:628.55px;width:961px;height:1.2px;background:#e4e6e9;"></div>
<div style="position:absolute;left:609.5px;top:599.5px;width:1.2px;height:29.75px;background:#e3e5e8;"></div>
<div style="position:absolute;left:747px;top:599.5px;width:1.2px;height:29.75px;background:#e3e5e8;"></div>
<div style="position:absolute;left:884px;top:599.5px;width:1.2px;height:29.75px;background:#e3e5e8;"></div>
<div style="position:absolute;left:1021.5px;top:599.5px;width:1.2px;height:29.75px;background:#e3e5e8;"></div>
<div class="t" style="left:231.20px;top:610.33px;font-size:10.6px;line-height:10.6px;color:#3a3a3a;transform:scaleX(0.9572);transform-origin:0 0;">adc2</div>
<div class="t" style="left:348.60px;top:610.53px;font-size:10px;line-height:10px;color:#222;font-weight:700;">Adicional de rebate</div>
<div class="t" style="left:486.10px;top:611.25px;font-size:10.1px;line-height:10.1px;color:#222;font-weight:700;">$0</div>
<div class="t" style="left:623.20px;top:611.25px;font-size:10.1px;line-height:10.1px;color:#222;font-weight:700;">$0</div>
<div class="t" style="left:760.70px;top:611.25px;font-size:10.1px;line-height:10.1px;color:#222;font-weight:700;">$0</div>
<div style="position:absolute;left:198px;top:293.5px;width:1px;height:320.5px;background:#dde2e8;"></div>
<div style="position:absolute;left:1159px;top:293.5px;width:1.2px;height:320.5px;background:#d9dcdf;"></div>
<svg style="position:absolute;left:0;top:0" width="1200" height="614" viewBox="0 0 1200 614"><path d="M889.8 369.8 L896.6 369.8 L903.3 369.8 L917.5 369.8 L921.5 369.8 L937.3 369.8 L941.6 369.8 L972.8 383.3 L976.4 383.3 L1017.6 383.3" fill="none" stroke="#9dbfd8" stroke-width="1"/><path d="M886.8 369.8 L889.8 366.8 L892.8 369.8 L889.8 372.8 Z" fill="#e3111b"/><path d="M893.6 369.8 L896.6 366.8 L899.6 369.8 L896.6 372.8 Z" fill="#e3111b"/><path d="M900.3 369.8 L903.3 366.8 L906.3 369.8 L903.3 372.8 Z" fill="#e3111b"/><path d="M914.5 369.8 L917.5 366.8 L920.5 369.8 L917.5 372.8 Z" fill="#e3111b"/><path d="M918.5 369.8 L921.5 366.8 L924.5 369.8 L921.5 372.8 Z" fill="#e3111b"/><path d="M934.3 369.8 L937.3 366.8 L940.3 369.8 L937.3 372.8 Z" fill="#e3111b"/><path d="M938.6 369.8 L941.6 366.8 L944.6 369.8 L941.6 372.8 Z" fill="#e3111b"/><path d="M969.8 383.3 L972.8 380.3 L975.8 383.3 L972.8 386.3 Z" fill="#e3111b"/><path d="M973.4 383.3 L976.4 380.3 L979.4 383.3 L976.4 386.3 Z" fill="#e3111b"/><path d="M1015.3 383.3 L1017.6 381.0 L1019.9 383.3 L1017.6 385.6 Z" fill="#e3111b"/></svg>
<svg style="position:absolute;left:0;top:0" width="1200" height="614" viewBox="0 0 1200 614"><path d="M889.8 399.4 L896.6 399.4 L903.3 408.9 L903.3 413.3 L917.5 409.7 L921.5 409.7 L937.3 408.5 L941.6 408.5 L972.8 408.5 L976.4 408.2 L1017.6 408.5" fill="none" stroke="#9dbfd8" stroke-width="1"/><path d="M886.8 399.4 L889.8 396.4 L892.8 399.4 L889.8 402.4 Z" fill="#12807f"/><path d="M893.6 399.4 L896.6 396.4 L899.6 399.4 L896.6 402.4 Z" fill="#12807f"/><path d="M900.3 408.9 L903.3 405.9 L906.3 408.9 L903.3 411.9 Z" fill="#12807f"/><path d="M900.3 413.3 L903.3 410.3 L906.3 413.3 L903.3 416.3 Z" fill="#12807f"/><path d="M914.5 409.7 L917.5 406.7 L920.5 409.7 L917.5 412.7 Z" fill="#12807f"/><path d="M918.5 409.7 L921.5 406.7 L924.5 409.7 L921.5 412.7 Z" fill="#12807f"/><path d="M934.3 408.5 L937.3 405.5 L940.3 408.5 L937.3 411.5 Z" fill="#12807f"/><path d="M938.6 408.5 L941.6 405.5 L944.6 408.5 L941.6 411.5 Z" fill="#12807f"/><path d="M969.8 408.5 L972.8 405.5 L975.8 408.5 L972.8 411.5 Z" fill="#12807f"/><path d="M973.4 408.2 L976.4 405.2 L979.4 408.2 L976.4 411.2 Z" fill="#12807f"/><path d="M1015.3 408.5 L1017.6 406.2 L1019.9 408.5 L1017.6 410.8 Z" fill="#12807f"/></svg>
<svg style="position:absolute;left:0;top:0" width="1200" height="614" viewBox="0 0 1200 614"><path d="M889.8 442.7 L896.6 442.7 L903.3 442.7 L903.3 435.2 L917.5 435.2 L921.5 435.2 L937.3 434.1 L941.6 434.1 L972.8 434.4 L976.4 429.2 L1017.6 429.2" fill="none" stroke="#9dbfd8" stroke-width="1"/><path d="M886.8 442.7 L889.8 439.7 L892.8 442.7 L889.8 445.7 Z" fill="#e3111b"/><path d="M893.6 442.7 L896.6 439.7 L899.6 442.7 L896.6 445.7 Z" fill="#e3111b"/><path d="M900.3 442.7 L903.3 439.7 L906.3 442.7 L903.3 445.7 Z" fill="#e3111b"/><path d="M900.3 435.2 L903.3 432.2 L906.3 435.2 L903.3 438.2 Z" fill="#e3111b"/><path d="M914.5 435.2 L917.5 432.2 L920.5 435.2 L917.5 438.2 Z" fill="#e3111b"/><path d="M918.5 435.2 L921.5 432.2 L924.5 435.2 L921.5 438.2 Z" fill="#e3111b"/><path d="M934.3 434.1 L937.3 431.1 L940.3 434.1 L937.3 437.1 Z" fill="#12807f"/><path d="M938.6 434.1 L941.6 431.1 L944.6 434.1 L941.6 437.1 Z" fill="#12807f"/><path d="M969.8 434.4 L972.8 431.4 L975.8 434.4 L972.8 437.4 Z" fill="#12807f"/><path d="M973.4 429.2 L976.4 426.2 L979.4 429.2 L976.4 432.2 Z" fill="#12807f"/><path d="M1015.3 429.2 L1017.6 426.9 L1019.9 429.2 L1017.6 431.5 Z" fill="#12807f"/></svg>
<svg style="position:absolute;left:0;top:0" width="1200" height="614" viewBox="0 0 1200 614"><path d="M889.8 472.7 L896.6 472.7 L903.3 472.7 L917.5 472.7 L921.5 472.7 L937.3 472.7 L941.6 472.7 L972.8 472.7 L973.3 459.3 L976.4 459.3 L1017.6 459.3" fill="none" stroke="#9dbfd8" stroke-width="1"/><path d="M886.8 472.7 L889.8 469.7 L892.8 472.7 L889.8 475.7 Z" fill="#e3111b"/><path d="M893.6 472.7 L896.6 469.7 L899.6 472.7 L896.6 475.7 Z" fill="#e3111b"/><path d="M900.3 472.7 L903.3 469.7 L906.3 472.7 L903.3 475.7 Z" fill="#e3111b"/><path d="M914.5 472.7 L917.5 469.7 L920.5 472.7 L917.5 475.7 Z" fill="#e3111b"/><path d="M918.5 472.7 L921.5 469.7 L924.5 472.7 L921.5 475.7 Z" fill="#e3111b"/><path d="M934.3 472.7 L937.3 469.7 L940.3 472.7 L937.3 475.7 Z" fill="#e3111b"/><path d="M938.6 472.7 L941.6 469.7 L944.6 472.7 L941.6 475.7 Z" fill="#e3111b"/><path d="M969.8 472.7 L972.8 469.7 L975.8 472.7 L972.8 475.7 Z" fill="#e3111b"/><path d="M970.3 459.3 L973.3 456.3 L976.3 459.3 L973.3 462.3 Z" fill="#12807f"/><path d="M973.4 459.3 L976.4 456.3 L979.4 459.3 L976.4 462.3 Z" fill="#12807f"/><path d="M1015.3 459.3 L1017.6 457.0 L1019.9 459.3 L1017.6 461.6 Z" fill="#12807f"/></svg>
<svg style="position:absolute;left:0;top:0" width="1200" height="614" viewBox="0 0 1200 614"><path d="M889.8 495.4 L896.6 495.4 L903.3 495.4 L917.5 495.4 L921.5 495.4 L937.3 495.4 L941.6 495.4 L972.8 495.4 L976.4 495.4 L1017.6 495.4" fill="none" stroke="#9dbfd8" stroke-width="1"/><path d="M886.8 495.4 L889.8 492.4 L892.8 495.4 L889.8 498.4 Z" fill="#12807f"/><path d="M893.6 495.4 L896.6 492.4 L899.6 495.4 L896.6 498.4 Z" fill="#12807f"/><path d="M900.3 495.4 L903.3 492.4 L906.3 495.4 L903.3 498.4 Z" fill="#12807f"/><path d="M914.5 495.4 L917.5 492.4 L920.5 495.4 L917.5 498.4 Z" fill="#12807f"/><path d="M918.5 495.4 L921.5 492.4 L924.5 495.4 L921.5 498.4 Z" fill="#12807f"/><path d="M934.3 495.4 L937.3 492.4 L940.3 495.4 L937.3 498.4 Z" fill="#12807f"/><path d="M938.6 495.4 L941.6 492.4 L944.6 495.4 L941.6 498.4 Z" fill="#12807f"/><path d="M969.8 495.4 L972.8 492.4 L975.8 495.4 L972.8 498.4 Z" fill="#12807f"/><path d="M973.4 495.4 L976.4 492.4 L979.4 495.4 L976.4 498.4 Z" fill="#12807f"/><path d="M1015.3 495.4 L1017.6 493.1 L1019.9 495.4 L1017.6 497.7 Z" fill="#12807f"/></svg>
<svg style="position:absolute;left:0;top:0" width="1200" height="614" viewBox="0 0 1200 614"><path d="M889.8 524.8 L896.6 524.8 L903.3 524.8 L917.5 524.8 L921.5 524.8 L937.3 524.8 L941.6 524.8 L972.8 524.8 L976.4 524.8 L1017.6 524.8" fill="none" stroke="#9dbfd8" stroke-width="1"/><path d="M886.8 524.8 L889.8 521.8 L892.8 524.8 L889.8 527.8 Z" fill="#12807f"/><path d="M893.6 524.8 L896.6 521.8 L899.6 524.8 L896.6 527.8 Z" fill="#12807f"/><path d="M900.3 524.8 L903.3 521.8 L906.3 524.8 L903.3 527.8 Z" fill="#12807f"/><path d="M914.5 524.8 L917.5 521.8 L920.5 524.8 L917.5 527.8 Z" fill="#12807f"/><path d="M918.5 524.8 L921.5 521.8 L924.5 524.8 L921.5 527.8 Z" fill="#12807f"/><path d="M934.3 524.8 L937.3 521.8 L940.3 524.8 L937.3 527.8 Z" fill="#12807f"/><path d="M938.6 524.8 L941.6 521.8 L944.6 524.8 L941.6 527.8 Z" fill="#12807f"/><path d="M969.8 524.8 L972.8 521.8 L975.8 524.8 L972.8 527.8 Z" fill="#12807f"/><path d="M973.4 524.8 L976.4 521.8 L979.4 524.8 L976.4 527.8 Z" fill="#12807f"/><path d="M1015.3 524.8 L1017.6 522.5 L1019.9 524.8 L1017.6 527.1 Z" fill="#12807f"/></svg>
<svg style="position:absolute;left:0;top:0" width="1200" height="614" viewBox="0 0 1200 614"><path d="M889.9 554.7 L905.9 554.7 L909.9 554.7 L928.0 554.7 L932.0 554.7 L967.6 554.7 L971.6 554.7 L1017.6 554.7" fill="none" stroke="#9dbfd8" stroke-width="1"/><path d="M886.9 554.7 L889.9 551.7 L892.9 554.7 L889.9 557.7 Z" fill="#12807f"/><path d="M902.9 554.7 L905.9 551.7 L908.9 554.7 L905.9 557.7 Z" fill="#12807f"/><path d="M906.9 554.7 L909.9 551.7 L912.9 554.7 L909.9 557.7 Z" fill="#12807f"/><path d="M925.0 554.7 L928.0 551.7 L931.0 554.7 L928.0 557.7 Z" fill="#12807f"/><path d="M929.0 554.7 L932.0 551.7 L935.0 554.7 L932.0 557.7 Z" fill="#12807f"/><path d="M964.6 554.7 L967.6 551.7 L970.6 554.7 L967.6 557.7 Z" fill="#12807f"/><path d="M968.6 554.7 L971.6 551.7 L974.6 554.7 L971.6 557.7 Z" fill="#12807f"/><path d="M1015.3 554.7 L1017.6 552.4 L1019.9 554.7 L1017.6 557.0 Z" fill="#12807f"/></svg>
<svg style="position:absolute;left:0;top:0" width="1200" height="614" viewBox="0 0 1200 614"><path d="M889.9 584.3 L892.0 584.3 L897.4 584.3 L900.0 584.3 L1017.6 584.3" fill="none" stroke="#9dbfd8" stroke-width="1"/><path d="M886.9 584.3 L889.9 581.3 L892.9 584.3 L889.9 587.3 Z" fill="#e3111b"/><path d="M889.0 584.3 L892.0 581.3 L895.0 584.3 L892.0 587.3 Z" fill="#e3111b"/><path d="M894.4 584.3 L897.4 581.3 L900.4 584.3 L897.4 587.3 Z" fill="#e3111b"/><path d="M897.0 584.3 L900.0 581.3 L903.0 584.3 L900.0 587.3 Z" fill="#e3111b"/><path d="M1015.3 584.3 L1017.6 582.0 L1019.9 584.3 L1017.6 586.6 Z" fill="#e3111b"/></svg>
<svg style="position:absolute;left:0;top:0" width="1200" height="614" viewBox="0 0 1200 614"><path d="M889.9 613.5 L892.5 613.5 L1017.6 613.5" fill="none" stroke="#9dbfd8" stroke-width="1"/><path d="M886.9 613.5 L889.9 610.5 L892.9 613.5 L889.9 616.5 Z" fill="#12807f"/><path d="M889.5 613.5 L892.5 610.5 L895.5 613.5 L892.5 616.5 Z" fill="#12807f"/><path d="M1015.3 613.5 L1017.6 611.2 L1019.9 613.5 L1017.6 615.8 Z" fill="#12807f"/></svg>
<div style="position:absolute;left:1160px;top:293.2px;width:22px;height:321px;background:#ffffff;border-radius:0 6px 0 0;box-shadow:2px 0 4px rgba(0,0,0,0.13);"></div>
<svg style="position:absolute;left:1168px;top:331px;" width="10" height="9" viewBox="0 0 10 9"><path d="M1 1 H9 L5.8 4.8 V8 L4.2 7 V4.8 Z" fill="none" stroke="#333" stroke-width="0.9" stroke-linejoin="round"/></svg>
<div class="t" style="left:1167px;top:342.5px;font-size:9px;line-height:10px;color:#333;transform-origin:0 0;transform:translate(10px,0) rotate(90deg);letter-spacing:0.4px;">Filtros</div>
<div class="t" style="left:1039.50px;top:609.15px;font-size:14px;line-height:14px;color:#cfcfcf;transform:scaleX(1.0438);transform-origin:0 0;">Activar Windows</div>
</body></html>
